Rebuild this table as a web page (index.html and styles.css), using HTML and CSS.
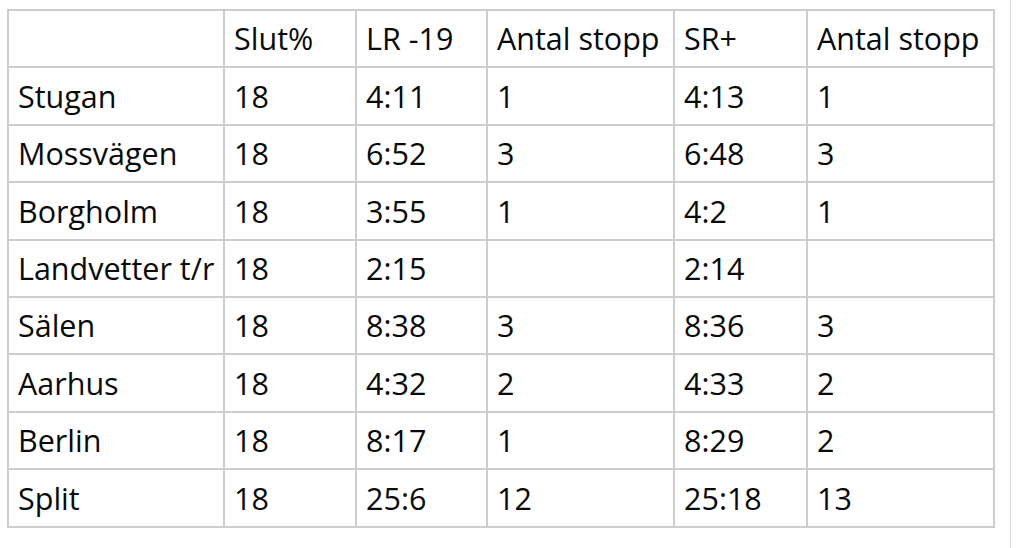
FILE: index.html
```html
<!DOCTYPE html>
<html lang="sv">
<head>
<meta charset="utf-8">
<title>Tabell</title>
<link rel="stylesheet" href="styles.css">
</head>
<body>
<div class="page">
  <table class="grid">
    <colgroup>
      <col class="c-name"><col class="c-a"><col class="c-b"><col class="c-stop"><col class="c-c"><col class="c-stop">
    </colgroup>
    <thead>
      <tr><th></th><th>Slut%</th><th>LR -19</th><th>Antal stopp</th><th>SR+</th><th>Antal stopp</th></tr>
    </thead>
    <tbody>
      <tr><td>Stugan</td><td>18</td><td>4:11</td><td>1</td><td>4:13</td><td>1</td></tr>
      <tr><td>Mossvägen</td><td>18</td><td>6:52</td><td>3</td><td>6:48</td><td>3</td></tr>
      <tr><td>Borgholm</td><td>18</td><td>3:55</td><td>1</td><td>4:2</td><td>1</td></tr>
      <tr><td>Landvetter t/r</td><td>18</td><td>2:15</td><td></td><td>2:14</td><td></td></tr>
      <tr><td>Sälen</td><td>18</td><td>8:38</td><td>3</td><td>8:36</td><td>3</td></tr>
      <tr><td>Aarhus</td><td>18</td><td>4:32</td><td>2</td><td>4:33</td><td>2</td></tr>
      <tr><td>Berlin</td><td>18</td><td>8:17</td><td>1</td><td>8:29</td><td>2</td></tr>
      <tr><td>Split</td><td>18</td><td>25:6</td><td>12</td><td>25:18</td><td>13</td></tr>
    </tbody>
  </table>
</div>
</body>
</html>
```

FILE: styles.css
```css
html, body {
  margin: 0;
  padding: 0;
  background: #ffffff;
}

.page {
  width: 1011px;
  height: 548px;
  box-sizing: border-box;
  border-right: 1px solid #dcdcdc;
  padding: 9px 0 0 7px;
  font-family: "Open Sans", "Liberation Sans", sans-serif;
  color: #0a0a0a;
}

.grid {
  border-collapse: collapse;
  table-layout: fixed;
  width: 988px;
}

.c-name { width: 216px; }
.c-a { width: 132px; }
.c-b { width: 131px; }
.c-stop { width: 187px; }
.c-c { width: 133px; }

.grid th,
.grid td {
  border: 2px solid #cdcdcd;
  height: 55.4px;
  padding: 0 0 0 9px;
  font-size: 30.5px;
  font-weight: 400;
  text-align: left;
  vertical-align: middle;
  white-space: nowrap;
  overflow: hidden;
  line-height: 1;
}
```
